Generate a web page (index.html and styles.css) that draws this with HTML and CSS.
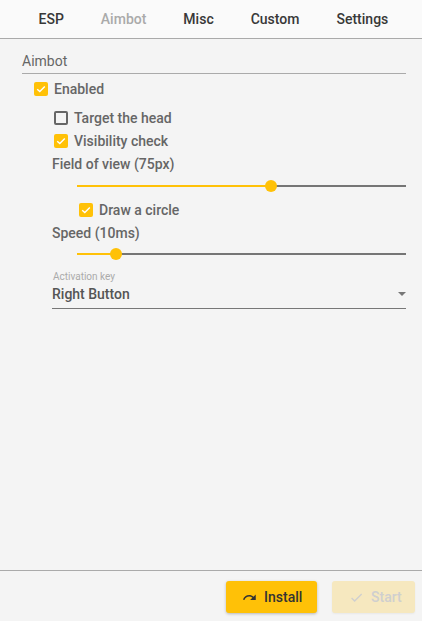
FILE: index.html
```html
<!DOCTYPE html>
<html>
<head>
<meta charset="utf-8">
<link rel="stylesheet" href="styles.css">
</head>
<body>
<div class="app">
  <header class="tabs">
    <div class="tab">ESP</div>
    <div class="tab active">Aimbot</div>
    <div class="tab">Misc</div>
    <div class="tab">Custom</div>
    <div class="tab">Settings</div>
  </header>
  <main class="content">
    <div class="section-title">Aimbot</div>
    <label class="check row-enabled indent-1">
      <span class="box on"><svg viewBox="0 0 14 14"><path d="M3.2 7.2 L5.8 9.6 L10.8 4.4" fill="none" stroke="#fff" stroke-width="1.4"/></svg></span>
      <span class="lbl">Enabled</span>
    </label>
    <label class="check row-first indent-2">
      <span class="box off"></span>
      <span class="lbl">Target the head</span>
    </label>
    <label class="check row indent-2">
      <span class="box on"><svg viewBox="0 0 14 14"><path d="M3.2 7.2 L5.8 9.6 L10.8 4.4" fill="none" stroke="#fff" stroke-width="1.4"/></svg></span>
      <span class="lbl">Visibility check</span>
    </label>
    <div class="field-label row">Field of view (75px)</div>
    <div class="slider slider-a">
      <div class="track">
        <div class="fill" style="width:59%"></div>
        <div class="thumb" style="left:59%"></div>
      </div>
    </div>
    <label class="check row-circle indent-3">
      <span class="box on"><svg viewBox="0 0 14 14"><path d="M3.2 7.2 L5.8 9.6 L10.8 4.4" fill="none" stroke="#fff" stroke-width="1.4"/></svg></span>
      <span class="lbl">Draw a circle</span>
    </label>
    <div class="field-label row-speed">Speed (10ms)</div>
    <div class="slider slider-b">
      <div class="track">
        <div class="fill" style="width:12%"></div>
        <div class="thumb" style="left:12%"></div>
      </div>
    </div>
    <div class="select">
      <div class="select-label">Activation key</div>
      <div class="select-value">
        <span>Right Button</span>
        <span class="caret"></span>
      </div>
    </div>
  </main>
  <footer class="actions">
    <button class="btn primary">
      <svg class="icon" viewBox="0 0 24 24"><path d="M18.4 10.6C16.55 8.99 14.15 8 11.5 8c-4.65 0-8.58 3.03-9.96 7.22L3.9 16c1.05-3.19 4.05-5.5 7.6-5.5 1.95 0 3.73.72 5.12 1.88L13 16h9V7l-3.6 3.6z" fill="#333"/></svg>
      <span>Install</span>
    </button>
    <button class="btn disabled">
      <svg class="icon" viewBox="0 0 24 24"><path d="M9 16.17L4.83 12l-1.42 1.41L9 19 21 7l-1.41-1.41z" fill="#cfcfcf"/></svg>
      <span>Start</span>
    </button>
  </footer>
</div>
</body>
</html>
```

FILE: styles.css
```css
* { box-sizing: border-box; }
html, body { margin: 0; padding: 0; }
body {
  background: #f4f4f4;
  font-family: Roboto, "Noto Sans", sans-serif;
  font-size: 14px;
  color: #666;
}
.app {
  display: flex;
  flex-direction: column;
  height: 621px;
}
.tabs {
  height: 39px;
  background: #fafafa;
  border-bottom: 1px solid #aaaaaa;
  display: flex;
  align-items: center;
  padding-left: 20px;
}
.tab {
  padding: 0 18.5px;
  font-weight: 500;
  color: #383838;
  line-height: 38px;
}
.tab.active { color: #aaa; }

.content {
  flex: 1;
  padding: 14px 16px 0 22px;
}
.section-title {
  line-height: 17px;
  padding-bottom: 3px;
  border-bottom: 1px solid #aaa;
  color: #666;
}
.check {
  display: flex;
  align-items: center;
  font-weight: 500;
  color: #666;
}
.box {
  width: 14px;
  height: 14px;
  border-radius: 2px;
  margin-right: 6px;
  flex: none;
  display: block;
}
.box svg { display: block; width: 14px; height: 14px; }
.box.on { background: #ffc107; }
.box.off { border: 2px solid #666; }

.indent-1 { padding-left: 12px; }
.indent-2 { padding-left: 32px; }
.indent-3 { padding-left: 57px; }

.row-enabled { margin-top: 4px; height: 22px; }
.row-first { margin-top: 6px; height: 23px; }
.check.row, .field-label.row { height: 23px; }
.field-label {
  padding-left: 30px;
  font-weight: 500;
  color: #666;
  display: flex;
  align-items: center;
}
.row-circle { height: 25px; padding-top: 1px; }
.row-speed { height: 21px; }

.slider {
  height: 22px;
  padding-left: 55px;
  display: flex;
  align-items: center;
}
.track {
  position: relative;
  flex: 1;
  height: 2px;
  background: #757575;
}
.fill {
  height: 2px;
  background: #ffc107;
}
.thumb {
  position: absolute;
  top: -5px;
  width: 12px;
  height: 12px;
  margin-left: -6px;
  border-radius: 50%;
  background: #ffc107;
}

.select {
  margin-left: 30px;
  margin-top: 5px;
}
.select-label {
  font-size: 10px;
  color: #aaa;
  line-height: 14px;
  padding-left: 1px;
}
.select-value {
  display: flex;
  align-items: center;
  justify-content: space-between;
  height: 25px;
  padding-bottom: 5px;
  border-bottom: 1px solid #777;
  font-weight: 500;
  color: #555;
}
.caret {
  width: 0;
  height: 0;
  border-left: 4px solid transparent;
  border-right: 4px solid transparent;
  border-top: 4px solid #777;
}

.actions {
  height: 51px;
  border-top: 1px solid #aaa;
  display: flex;
  justify-content: flex-end;
  align-items: flex-start;
  padding: 10px 7px 0 0;
  gap: 15px;
}
.btn {
  height: 32px;
  border: none;
  border-radius: 3px;
  font-family: Roboto, "Noto Sans", sans-serif;
  font-size: 14px;
  font-weight: 500;
  display: flex;
  align-items: center;
  gap: 7px;
  cursor: pointer;
}
.btn .icon { width: 15px; height: 15px; display: block; }
.btn.primary {
  width: 91px;
  padding: 0 0 0 16px;
  background: #ffc107;
  color: #333;
  box-shadow: 0 1px 3px rgba(0,0,0,0.25);
}
.btn.disabled {
  width: 83px;
  padding: 0 0 0 17px;
  background: #f6e8bf;
  color: #cfcfcf;
  box-shadow: 0 1px 2px rgba(0,0,0,0.05);
}
```
